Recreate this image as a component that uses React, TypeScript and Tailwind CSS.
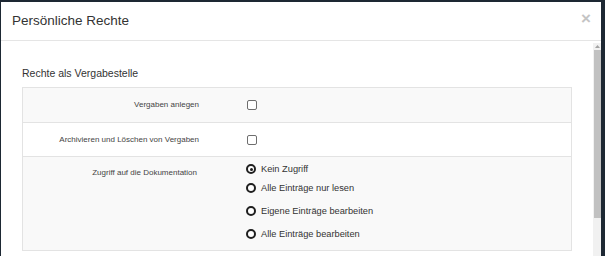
import React from "react";

const font = { fontFamily: '"Liberation Sans", Arial, sans-serif' };

function Checkbox() {
  return (
    <span className="block w-[10px] h-[10px] rounded-[2px] border-[1.5px] border-[#6e6e6e] bg-white" />
  );
}

function Radio({ checked, label }: { checked?: boolean; label: string }) {
  return (
    <div className="flex items-center h-[12px]">
      <span className="flex items-center justify-center w-[10px] h-[10px] rounded-full border-[2px] border-[#1f1f1f] bg-white">
        {checked && <span className="block w-[3px] h-[3px] rounded-full bg-[#1f1f1f]" />}
      </span>
      <span className="ml-[5px] text-[9.25px] leading-[12px] text-[#333]">{label}</span>
    </div>
  );
}

export default function App() {
  return (
    <div className="w-[605px] h-[256px] overflow-hidden bg-[#1d2833]" style={font}>
      <div className="ml-[1px] mt-[2px] w-[600px] h-[254px] bg-white flex flex-col">
        <div className="h-[39px] flex items-start justify-between border-b border-[#e5e5e5] pl-[11px] pr-[10px]">
          <h4 className="pt-[11px] text-[13.5px] leading-[16px] text-[#333]">Persönliche Rechte</h4>
          <span className="pt-[7px] text-[17px] leading-[20px] font-bold text-[#c4c4c4]">×</span>
        </div>
        <div className="flex flex-1 min-h-0">
          <div className="flex-1 pl-[21px]">
            <h5 className="pt-[26px] text-[10.5px] leading-[12px] text-[#333]">Rechte als Vergabestelle</h5>
            <div className="mt-[8px] w-[550px] border border-[#e3e3e3]">
              <div className="h-[34px] flex items-center bg-[#f9f9f9]">
                <div className="w-[176px] text-right text-[8px] leading-[10px] text-[#444]">Vergaben anlegen</div>
                <div className="ml-[48px]">
                  <Checkbox />
                </div>
              </div>
              <div className="h-[34px] flex items-center bg-white border-t border-[#e3e3e3]">
                <div className="w-[176px] text-right text-[8px] leading-[10px] text-[#444]">
                  Archivieren und Löschen von Vergaben
                </div>
                <div className="ml-[48px]">
                  <Checkbox />
                </div>
              </div>
              <div className="h-[94px] flex items-start bg-[#f9f9f9] border-t border-[#e3e3e3]">
                <div className="w-[174px] pt-[11px] text-right text-[8px] leading-[10px] text-[#444]">
                  Zugriff auf die Dokumentation
                </div>
                <div className="ml-[49px] pt-[6px] flex flex-col">
                  <Radio checked label="Kein Zugriff" />
                  <div className="mt-[7px]">
                    <Radio label="Alle Einträge nur lesen" />
                  </div>
                  <div className="mt-[11px]">
                    <Radio label="Eigene Einträge bearbeiten" />
                  </div>
                  <div className="mt-[11px]">
                    <Radio label="Alle Einträge bearbeiten" />
                  </div>
                </div>
              </div>
            </div>
          </div>
          <div className="w-[8px] mt-[2px] bg-[#f1f1f1] flex flex-col items-center">
            <div className="h-[7px] flex items-center justify-center">
              <svg width="5" height="3" viewBox="0 0 5 3">
                <path d="M0 3 L2.5 0 L5 3 Z" fill="#a3a3a3" />
              </svg>
            </div>
            <div className="w-[7px] h-[168px] bg-[#c1c1c1]" />
          </div>
        </div>
      </div>
    </div>
  );
}
